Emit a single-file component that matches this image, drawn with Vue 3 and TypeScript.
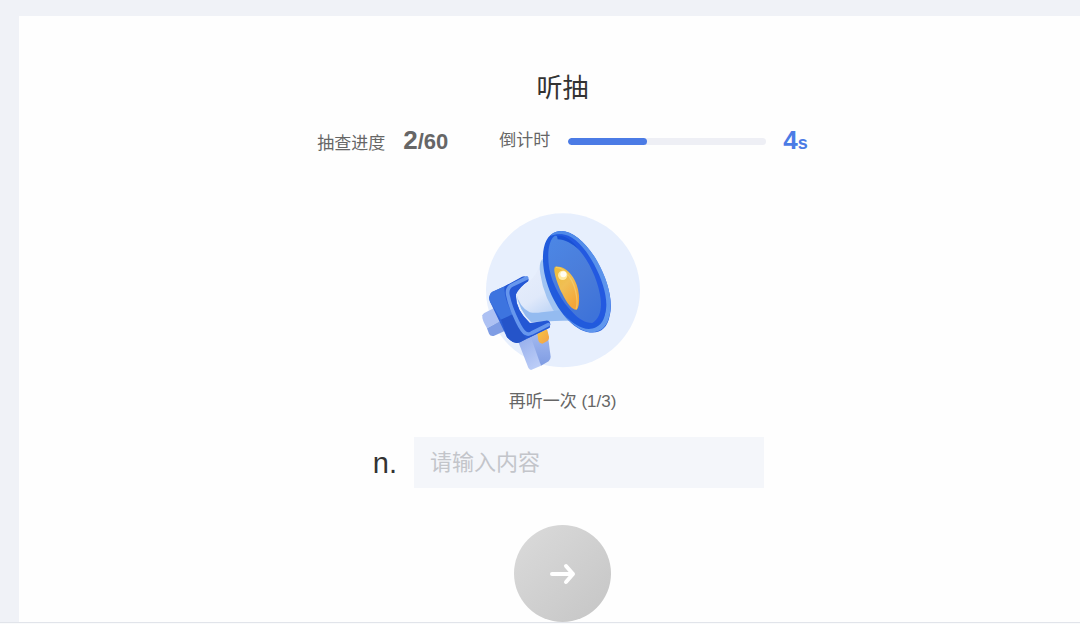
<script setup lang="ts">
import { computed, ref } from 'vue'

const current = ref(2)
const total = 60
const secondsLeft = ref(4)
const secondsTotal = 10
const plays = ref(1)
const maxPlays = 3
const answer = ref('')

const percent = computed(() => (secondsLeft.value / secondsTotal) * 100)

function replay() {
  if (plays.value < maxPlays) plays.value += 1
}

function submit() {
  if (!answer.value.trim()) return
  current.value = Math.min(total, current.value + 1)
  answer.value = ''
}
</script>

<template>
  <div class="page">
    <main class="panel">
      <h1 class="title">听抽</h1>

      <div class="status">
        <div class="progress">
          <span class="label">抽查进度</span>
          <strong class="count"><span class="now">{{ current }}</span>/{{ total }}</strong>
        </div>
        <span id="timer-label" class="label timer-label">倒计时</span>
        <div
          class="track"
          role="progressbar"
          aria-labelledby="timer-label"
          :aria-valuenow="secondsLeft"
          aria-valuemin="0"
          :aria-valuemax="secondsTotal"
        >
          <div class="fill" :style="{ width: percent + '%' }"></div>
        </div>
        <strong class="seconds">{{ secondsLeft }}<span class="unit">s</span></strong>
      </div>

      <button class="replay" type="button" @click="replay">
        <svg class="horn" viewBox="10 0 540 525" aria-hidden="true">
          <defs>
            <linearGradient id="cone" x1="0" y1="0" x2="0.6" y2="1">
              <stop offset="0" stop-color="#e9effc" />
              <stop offset="0.6" stop-color="#e0e9fa" />
              <stop offset="1" stop-color="#b5cff5" />
            </linearGradient>
            <linearGradient id="bowl" x1="0.2" y1="0" x2="0.7" y2="1">
              <stop offset="0" stop-color="#4c86e4" />
              <stop offset="0.55" stop-color="#4a7cd9" />
              <stop offset="1" stop-color="#3e73d9" />
            </linearGradient>
            <linearGradient id="rim" x1="0" y1="0" x2="1" y2="1">
              <stop offset="0" stop-color="#4d88e8" />
              <stop offset="1" stop-color="#6399ee" />
            </linearGradient>
            <linearGradient id="gold" x1="0" y1="0" x2="0.6" y2="1">
              <stop offset="0" stop-color="#efbd35" />
              <stop offset="0.5" stop-color="#f0bf55" />
              <stop offset="1" stop-color="#f4a638" />
            </linearGradient>
            <linearGradient id="knob" x1="0" y1="0" x2="1" y2="1">
              <stop offset="0" stop-color="#f8c640" />
              <stop offset="1" stop-color="#f2a04a" />
            </linearGradient>
            <linearGradient id="grip" x1="0.2" y1="0" x2="0.7" y2="1">
              <stop offset="0" stop-color="#93acea" />
              <stop offset="1" stop-color="#bccdf7" />
            </linearGradient>
            <linearGradient id="grip-side" x1="0" y1="0" x2="0" y2="1">
              <stop offset="0" stop-color="#a8bdf1" />
              <stop offset="1" stop-color="#7f9ce3" />
            </linearGradient>
          </defs>
          <circle cx="280" cy="256" r="231" fill="#e7effd" />

          <path d="M44 324 L72 310 L96 346 L52 370 Q36 344 38 331 Q40 326 44 324Z" fill="#adc1f3" />
          <path d="M52 370 L96 346 L110 376 L72 393 Q62 395 58 386Z" fill="#7f9de4" />

          <path d="M144 406 L190 382 L214 482 L184 495 Q179 494 176 488Z" fill="url(#grip)" />
          <path d="M182 392 L232 372 L243 455 Q243 463 237 469 L214 482Z" fill="url(#grip-side)" />
          <path d="M203 386 L232 373 L238 395 Q239 406 229 410 L218 416 Q209 416 206 406Z" fill="url(#knob)" />

          <path d="M139 257 L174 233 Q202 213 215 166 L250 190 L309 340 Q286 346 252 348 L184 350 Q151 314 139 257Z" fill="url(#cone)" />
          <path d="M218 161 Q206 177 212 207 Q222 279 270 345 L313 348 Q258 292 234 221Z" fill="#9fc3f2" />
          <path d="M139 262 Q148 306 180 322 Q196 325 216 322 L272 316 Q292 325 309 346 L184 351 Q148 318 139 262Z" fill="#94bbf0" />

          <path d="M67 261 L105 244 L158 217 L176 228 Q150 246 139 268 Q137 313 181 357 L239 350 L239 368 L151 412 Q135 418 122 406 L112 397 L61 290 Q54 270 67 261Z" fill="#2e61d6" />
          <path d="M67 261 L105 244 Q101 279 129 328 L94 344 L61 290 Q54 270 67 261Z" fill="#3d74df" />
          <path d="M94 344 L130 328 Q145 363 170 401 L151 412 Q135 418 122 406 L112 397Z" fill="#2554c9" />
          <path d="M105 244 L157 215 Q170 211 177 223 L176 228 Q148 246 139 267 Q134 310 181 354 L228 347 Q240 345 242 357 L240 368 L174 400 Q155 388 128 326 Q102 269 105 244Z" fill="#2457d4" />
          <path d="M171 219 L130 239 Q109 248 115 272 Q122 307 143 349 Q158 380 168 385 Q175 390 186 384 L236 359" fill="none" stroke="#6797ed" stroke-width="11" stroke-linecap="round" stroke-linejoin="round" />

          <path d="M260 80 C300 68 350 111 382 169 C413 224 432 287 420 332 C412 379 378 394 333 374 C283 346 239 278 224 203 C213 142 223 91 260 80Z" fill="#215bdc" />
          <path d="M258 81 C297 65 351 111 383 169 C415 226 432 290 418 337 C407 383 368 390 336 374 C314 364 295 345 283 328 C312 362 350 382 379 367 C405 354 411 322 407 286 C400 238 379 187 348 144 C316 100 280 76 242 93 Q248 84 258 81Z" fill="url(#rim)" />
          <path d="M262 90 C300 78 343 122 374 179 C402 232 418 291 406 326 C394 362 355 365 322 339 C276 302 247 249 237 193 C228 144 233 99 262 90Z" fill="#2359e0" />
          <path d="M256 92 C274 96 301 105 326 132 C363 174 388 236 393 282 C397 315 389 342 368 354 C346 353 329 342 313 326 C275 289 248 238 239 192 C232 149 236 104 256 92Z" fill="url(#bowl)" />
          <path d="M262 93 C285 87 310 108 330 137 C310 116 284 103 264 103Z" fill="#1850d4" />
          <path d="M257 185 C292 182 325 224 328 272 Q330 305 321 314 C307 315 292 295 278 266 C264 240 247 190 257 185Z" fill="url(#gold)" />
          <path d="M259 187 C285 187 315 226 321 276 Q324 299 319 313" fill="none" stroke="#f5d47c" stroke-opacity="0.6" stroke-width="4" />
          <circle cx="279" cy="211" r="14" fill="#ffeaa0" />
          <circle cx="281" cy="208" r="9" fill="#fffdf2" />
        </svg>
        <span class="replay-text">再听一次 ({{ plays }}/{{ maxPlays }})</span>
      </button>

      <form id="answer-form" class="answer" @submit.prevent="submit">
        <label class="part" for="answer">n.</label>
        <input id="answer" v-model="answer" class="field" type="text" placeholder="请输入内容" autocomplete="off" />
      </form>

      <button class="next" type="submit" form="answer-form" aria-label="下一个">
        <svg class="arrow" viewBox="0 0 28 24" aria-hidden="true">
          <path d="M3 12H24M17 4L24 12L17 20" />
        </svg>
      </button>
    </main>
  </div>
</template>

<style>
body {
  margin: 0;
  background: #fafbfc;
}
</style>

<style scoped>
.page {
  box-sizing: border-box;
  display: flex;
  min-height: calc(100vh - 1px);
  padding: 16px 0 0 19px;
  border-bottom: 1px solid #e1e4ea;
  background: #f0f2f7;
  color: #333;
  font-family: "Liberation Sans", "Noto Sans CJK SC", sans-serif;
}

.panel {
  flex: 1;
  display: flex;
  flex-direction: column;
  align-items: center;
  padding: 53px 0 0 26px;
  background: #fefefe;
}

.title {
  margin: 0;
  font-size: 26px;
  font-weight: 400;
  line-height: 38px;
}

.status {
  display: flex;
  align-items: center;
  height: 32px;
  margin-top: 18px;
  color: #666;
}

.progress {
  display: flex;
  align-items: baseline;
}

.label {
  font-size: 17px;
  line-height: 24px;
}

.count {
  margin-left: 18px;
  font-size: 22px;
  line-height: 32px;
}

.now {
  font-size: 26px;
}

.timer-label {
  margin-left: 51px;
}

.track {
  width: 198px;
  height: 7px;
  margin-left: 18px;
  border-radius: 4px;
  background: #eeeff5;
  overflow: hidden;
}

.fill {
  height: 100%;
  border-radius: 4px;
  background: #4b7be5;
}

.seconds {
  margin-left: 17px;
  color: #4b7be5;
  font-size: 26px;
  line-height: 32px;
}

.unit {
  font-size: 18px;
}

button {
  padding: 0;
  border: 0;
  font: inherit;
  cursor: pointer;
}

.replay {
  display: flex;
  flex-direction: column;
  align-items: center;
  margin-top: 48px;
  background: none;
  color: #666;
}

.horn {
  display: block;
  width: 180px;
  height: 175px;
}

.replay-text {
  margin-top: 10px;
  font-size: 17px;
  line-height: 24px;
}

.answer {
  display: flex;
  align-items: center;
  margin-top: 23px;
}

.part {
  width: 36px;
  margin-right: 17px;
  font-size: 29px;
  line-height: 50px;
  text-align: right;
}

.field {
  box-sizing: border-box;
  width: 350px;
  height: 51px;
  padding: 0 16px;
  border: 0;
  outline: 0;
  background: #f4f6fa;
  color: #333;
  font: inherit;
  font-size: 22px;
}

.field::placeholder {
  color: #c3c5ca;
  opacity: 1;
}

.next {
  display: flex;
  align-items: center;
  justify-content: center;
  width: 97px;
  height: 97px;
  margin-top: 37px;
  border-radius: 50%;
  background: linear-gradient(135deg, #dbdbdb, #c5c5c5);
}

.arrow {
  width: 28px;
  height: 24px;
  fill: none;
  stroke: #fff;
  stroke-width: 4;
  stroke-linecap: round;
  stroke-linejoin: round;
}
</style>
